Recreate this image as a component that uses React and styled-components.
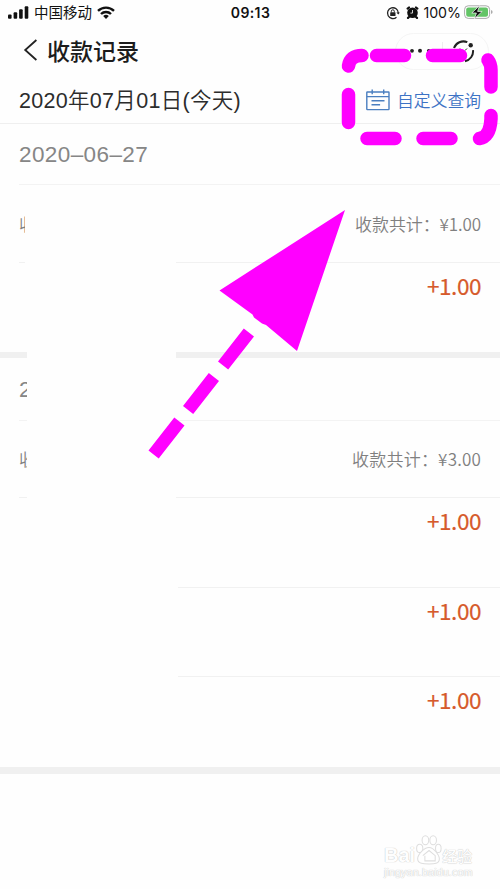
import React from 'react';
import styled, { createGlobalStyle } from 'styled-components';

const Global = createGlobalStyle`
  * { box-sizing: border-box; }
  body { margin: 0; background: #fefefe; }
`;
const cjk = `'Noto Sans CJK SC', sans-serif`;

const Screen = styled.main`
  position: relative;
  width: 500px;
  height: 889px;
  overflow: hidden;
  background: #fefefe;
  color: #222;
  font-family: Inter, ${cjk};
  white-space: nowrap;
`;
const StatusBar = styled.header`
  display: grid;
  grid-template-columns: 1fr auto 1fr;
  align-items: center;
  height: 25px;
  padding: 0 7px 0 8px;
  color: #111;
`;
const StatusSide = styled.div`
  display: flex;
  align-items: center;
  justify-content: ${p => (p.$end ? 'flex-end' : 'flex-start')};
  gap: ${p => (p.$end ? '3px' : '5px')};
  font-size: ${p => (p.$end ? '14.2px' : '14.5px')};
  line-height: 20px;
  svg { flex: none; display: block; }
`;
const Clock = styled.time`
  font-size: 14px;
  font-weight: 600;
  letter-spacing: 0.4px;
`;
const NavBar = styled.nav`
  display: flex;
  align-items: center;
  justify-content: space-between;
  height: 50px;
  padding: 0 11px 0 23px;
`;
const NavTitle = styled.h1`
  display: flex;
  align-items: center;
  gap: 9px;
  margin: 0;
  font: 500 23px/34px ${cjk};
  color: #1c1c1c;
`;
const Capsule = styled.div`
  display: flex;
  align-items: center;
  justify-content: space-between;
  width: 94px;
  height: 37px;
  margin-top: 2px;
  padding: 0 13px 0 14px;
  border: 1px solid #f5f5f5;
  border-radius: 19px;
`;
const Split = styled.i`
  width: 1px;
  height: 19px;
  background: #eee;
`;
const DateBar = styled.section`
  display: flex;
  align-items: center;
  justify-content: space-between;
  height: 49px;
  padding: 1px 19px 0;
  border-bottom: 1px solid #efefef;
`;
const Today = styled.div`
  font: 350 21.5px/30px 'Liberation Sans', ${cjk};
  letter-spacing: 0.3px;
  padding-top: 2px;
  color: #2c2c2c;
`;
const QueryLink = styled.a`
  display: flex;
  align-items: center;
  gap: 7px;
  font: 350 16.8px/24px ${cjk};
  color: #3d73c5;
`;
const Group = styled.section`
  border-bottom: ${p => p.$gap}px solid #f0f0f0;
`;
const GroupDate = styled.div`
  display: flex;
  align-items: center;
  height: ${p => p.$height}px;
  margin-left: 19px;
  padding-top: 2px;
  border-bottom: 1px solid #f3f3f3;
  font: 400 22.5px/30px 'Liberation Sans', sans-serif;
  letter-spacing: 0.4px;
  color: #868686;
`;
const Summary = styled.div`
  display: flex;
  align-items: center;
  justify-content: space-between;
  height: ${p => p.$height}px;
  margin-left: 19px;
  padding-right: 19px;
  border-bottom: 1px solid #f1f1f1;
  font: 350 17px/26px ${cjk};
  color: #808080;
`;
const Total = styled.span`
  letter-spacing: ${p => p.$spacing}px;
`;
const Item = styled.div`
  height: ${p => p.$height}px;
  margin-left: 178px;
  padding: 8px 19px 0 0;
  border-bottom: ${p => (p.$last ? '0' : '1px solid #f1f1f1')};
  text-align: right;
  font: 400 22.5px/28px ${cjk};
  letter-spacing: -0.45px;
  -webkit-text-stroke: 0.2px #d65a2b;
  color: #d65a2b;
`;
const Cover = styled.div`
  position: absolute;
  left: ${p => p.$left}px;
  top: ${p => p.$top}px;
  width: ${p => 176 - p.$left}px;
  height: ${p => p.$height}px;
  background: #fefefe;
`;
const Markup = styled.svg`
  position: absolute;
  left: 0;
  top: 0;
  pointer-events: none;
`;
const Watermark = styled.footer`
  position: absolute;
  left: 384px;
  top: 834px;
  width: 92px;
  color: #fefefe;
  text-shadow: 0 0 1px #c5c5c5, 0 0 1px #d2d2d2;
`;
const WatermarkBrand = styled.div`
  display: flex;
  align-items: flex-end;
  height: 31px;
  font: 700 20px/19px 'Liberation Sans', sans-serif;
  span:last-child { font: 500 15px/19px ${cjk}; }
`;
const WatermarkUrl = styled.div`
  margin-top: 1px;
  font: 400 11px/13px 'Liberation Sans', sans-serif;
`;

const Signal = () => (
  <svg width="21" height="13" viewBox="0 0 21 13" fill="#111">
    <rect x="0" y="8.5" width="3.6" height="4.2" rx="1" />
    <rect x="5.6" y="6.2" width="3.6" height="6.5" rx="1" />
    <rect x="11.1" y="3.2" width="3.6" height="9.5" rx="1" />
    <rect x="16.7" y="0.2" width="3.6" height="12.5" rx="1" />
  </svg>
);
const Wifi = () => (
  <svg width="18" height="13" viewBox="0 0 18 13" fill="none" stroke="#111" strokeWidth="2.4">
    <path d="M1 4.8a11.6 11.6 0 0 1 16 0" />
    <path d="M4 8a7.2 7.2 0 0 1 10 0" />
    <path d="M6.2 10a4 4 0 0 1 5.6 0L9 12.9z" fill="#111" stroke="none" />
  </svg>
);
const Lock = () => (
  <svg width="14" height="14" viewBox="0 0 14 14" fill="none" stroke="#222" strokeWidth="1.3">
    <path d="M10.5 11.2A5.4 5.4 0 1 1 12.3 7" />
    <path d="m10.4 6.4 1.9 2.2 1.5-2.2z" fill="#222" stroke="none" />
    <rect x="4.2" y="6.2" width="5.3" height="3.9" rx=".6" fill="#222" stroke="none" />
    <path d="M5.3 6.4V5.3a1.5 1.5 0 0 1 3 0v1.1" strokeWidth="1" />
  </svg>
);
const AlarmIcon = styled.svg`
  margin: 0 1px 0 3px;
`;
const Alarm = () => (
  <AlarmIcon width="13" height="13" viewBox="0 0 13 13">
    <circle cx="6.5" cy="6.8" r="5.3" fill="#111" />
    <path d="M1.6 2.6 3 1.5M11.4 2.6 10 1.5M3 11l-1 .9M10 11l1 .9" stroke="#111" strokeWidth="2.2" strokeLinecap="round" />
    <path d="M6.5 4v3.1H4.4" fill="none" stroke="#fff" strokeWidth=".8" />
  </AlarmIcon>
);
const Battery = () => (
  <svg width="29" height="15" viewBox="0 0 29 15">
    <rect x=".6" y=".8" width="25" height="12.6" rx="3.6" fill="#fff" stroke="#aaa" />
    <rect x="2.2" y="2.4" width="21.8" height="9.4" rx="2.1" fill="#63c466" />
    <path d="M27.2 5v4q1.3-.6 1.3-2t-1.3-2z" fill="#999" />
    <path d="M15.6.6 7.8 8h4.6l-2 5.8L18.200 6.400h-4.600z" fill="#111" stroke="#fff" strokeWidth=".7" />
  </svg>
);
const Calendar = () => (
  <svg width="24" height="22" viewBox="0 0 24 22" fill="none" stroke="#4b7fc0" strokeWidth="1.4">
    <rect x=".8" y="3" width="22.2" height="17.6" rx=".5" />
    <path d="M.8 7.6H23M6.2.5v4.8M17.7.5v4.8M5.5 11.7h13M5.5 15.7h8.6" />
  </svg>
);
const Paw = () => (
  <svg width="27" height="31" viewBox="0 0 25 30" fill="#fff" stroke="#dedede" strokeWidth="1">
    <ellipse cx="4" cy="14" rx="3" ry="4" />
    <ellipse cx="9.5" cy="6" rx="3.2" ry="4.4" />
    <ellipse cx="17" cy="6" rx="3.2" ry="4.4" />
    <ellipse cx="22" cy="14" rx="2.7" ry="4" />
    <path d="M13 13c5 0 10 8 10 11 0 5-5 5-10 5S2 29 2 24c0-4 6-11 11-11z" />
    <path d="m7 21 6-5 6 5v5H9v-5" fill="none" />
  </svg>
);

const groups = [
  { date: '2020-06-27', total: '¥1.00', spacing: -0.1, dateH: 61, sumH: 78, items: [89], gap: 6 },
  { date: '2', total: '¥3.00', spacing: 0.2, dateH: 63, sumH: 77, items: [90, 89, 90], gap: 7 },
];

export default function App() {
  return (
    <Screen>
      <Global />
      <StatusBar>
        <StatusSide><Signal /><span>中国移动</span><Wifi /></StatusSide>
        <Clock>09:13</Clock>
        <StatusSide $end><Lock /><Alarm /><span>100%</span><Battery /></StatusSide>
      </StatusBar>
      <NavBar>
        <NavTitle>
          <svg width="15" height="24" viewBox="0 0 15 24" fill="none" stroke="#222" strokeWidth="1.8">
            <path d="M13.4 2 2.2 12l11.2 10" />
          </svg>
          收款记录
        </NavTitle>
        <Capsule>
          <svg width="23" height="6" viewBox="0 0 23 6" fill="#222">
            <circle cx="2" cy="2.8" r="1.9" /><circle cx="10" cy="2.8" r="2" /><circle cx="18.8" cy="2.8" r="1.9" />
          </svg>
          <Split />
          <svg width="23" height="23" viewBox="0 0 23 23" fill="none" stroke="#222" strokeWidth="2">
            <path d="M15.3 2.2A10 10 0 0 0 2 8M21 10.2A10 10 0 0 1 13 21.2" />
            <circle cx="18.7" cy="5.2" r="2.2" fill="#222" stroke="none" />
            <path d="M8 8.5l2 2M15 8.5l-2 2" strokeWidth="1" />
          </svg>
        </Capsule>
      </NavBar>
      <DateBar>
        <Today>2020年07月01日(今天)</Today>
        <QueryLink><Calendar />自定义查询</QueryLink>
      </DateBar>
      {groups.map(g => (
        <Group key={g.date} $gap={g.gap}>
          <GroupDate $height={g.dateH}>{g.date.replace(/-/g, '–')}</GroupDate>
          <Summary $height={g.sumH}>
            <span>收</span>
            <Total $spacing={g.spacing}>收款共计：{g.total}</Total>
          </Summary>
          {g.items.map((h, i) => (
            <Item key={i} $height={h} $last={i === g.items.length - 1}>+1.00</Item>
          ))}
        </Group>
      ))}
      <Cover $left={25} $top={196} $height={110} />
      <Cover $left={27} $top={306} $height={264} />
      <Markup width="500" height="480" viewBox="0 0 500 480">
        <path d="M345 210 219.5 290.5l33 24 1.5 3 8 6 4 1.5L297 351z" fill="#f0f" />
        <path d="m148.5 450.5 25.8-33 10.2 8-25.8 33zM183 406l25.8-33 10.2 8-25.8 33zM218 361.5l25.8-33 10.2 8-25.8 33z" fill="#f0f" />
        <path
          d="M348.5 66Q350 55.5 362 55.5M376.5 55.5H404.5M432.5 55.5H460.5M488 60Q491 64 491 70V87M491 115.5V119Q490 137 479.5 138.5M451 138.5H423M395 138.5H367M348.5 122.5V94.5"
          fill="none" stroke="#f0f" strokeWidth="13.5" strokeLinecap="round"
        />
      </Markup>
      <Watermark>
        <WatermarkBrand><span>Bai</span><Paw /><span>经验</span></WatermarkBrand>
        <WatermarkUrl>jingyan.baidu.com</WatermarkUrl>
      </Watermark>
    </Screen>
  );
}
